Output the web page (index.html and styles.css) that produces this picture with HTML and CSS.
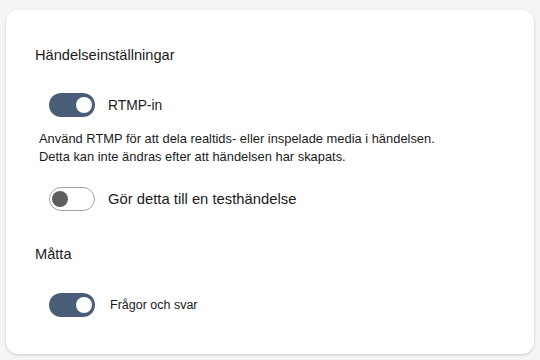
FILE: index.html
```html
<!DOCTYPE html>
<html>
<head>
    <title>Händelseinställningar</title>
    <link rel="stylesheet" href="styles.css">
</head>
<body>
    <div class="card">
        <h2 class="section-title">Händelseinställningar</h2>
        <div class="toggle-row first">
            <span class="toggle on"><span class="thumb"></span></span>
            <span class="toggle-label">RTMP-in</span>
        </div>
        <p class="description">Använd RTMP för att dela realtids- eller inspelade media i händelsen.<br>Detta kan inte ändras efter att händelsen har skapats.</p>
        <div class="toggle-row second">
            <span class="toggle off"><span class="thumb"></span></span>
            <span class="toggle-label large">Gör detta till en testhändelse</span>
        </div>
        <h2 class="section-title measure">Måtta</h2>
        <div class="toggle-row third">
            <span class="toggle on"><span class="thumb"></span></span>
            <span class="toggle-label small">Frågor och svar</span>
        </div>
    </div>
</body>
</html>
```

FILE: styles.css
```css
body {
    margin: 0;
    padding: 10px 6px 6px 6px;
    background-color: #f6f5f3;
    font-family: "Liberation Sans", Arial, sans-serif;
    color: #1b1a19;
}
.card {
    background-color: #fff;
    border-radius: 12px;
    box-shadow: 0 1px 3px rgba(0, 0, 0, 0.18);
    height: 344px;
    padding: 35px 29px 0 29px;
    box-sizing: border-box;
}
.section-title {
    margin: 0;
    font-size: 14.6px;
    font-weight: normal;
    line-height: 20px;
}
.section-title.measure {
    margin-top: 33px;
}
.toggle-row {
    display: flex;
    align-items: center;
    margin-left: 14px;
    gap: 13px;
}
.toggle-row.first {
    margin-top: 28px;
}
.toggle-row.second {
    margin-top: 21px;
}
.toggle-row.third {
    margin-top: 29px;
    gap: 15px;
}
.toggle {
    width: 46px;
    height: 24px;
    border-radius: 12px;
    box-sizing: border-box;
    display: flex;
    align-items: center;
    padding: 0 3px;
}
.toggle.on {
    background-color: #4a5d78;
    justify-content: flex-end;
}
.toggle.off {
    background-color: #fff;
    border: 1px solid #a8a6a4;
    padding: 0 2px;
}
.thumb {
    width: 16px;
    height: 16px;
    border-radius: 50%;
}
.toggle.on .thumb {
    background-color: #fff;
}
.toggle.off .thumb {
    background-color: #605e5c;
}
.toggle-label {
    font-size: 13.8px;
}
.toggle-label.large {
    font-size: 14.8px;
}
.toggle-label.small {
    font-size: 12.5px;
}
.description {
    margin: 13px 0 0 4px;
    font-size: 12.9px;
    line-height: 18px;
}
```
